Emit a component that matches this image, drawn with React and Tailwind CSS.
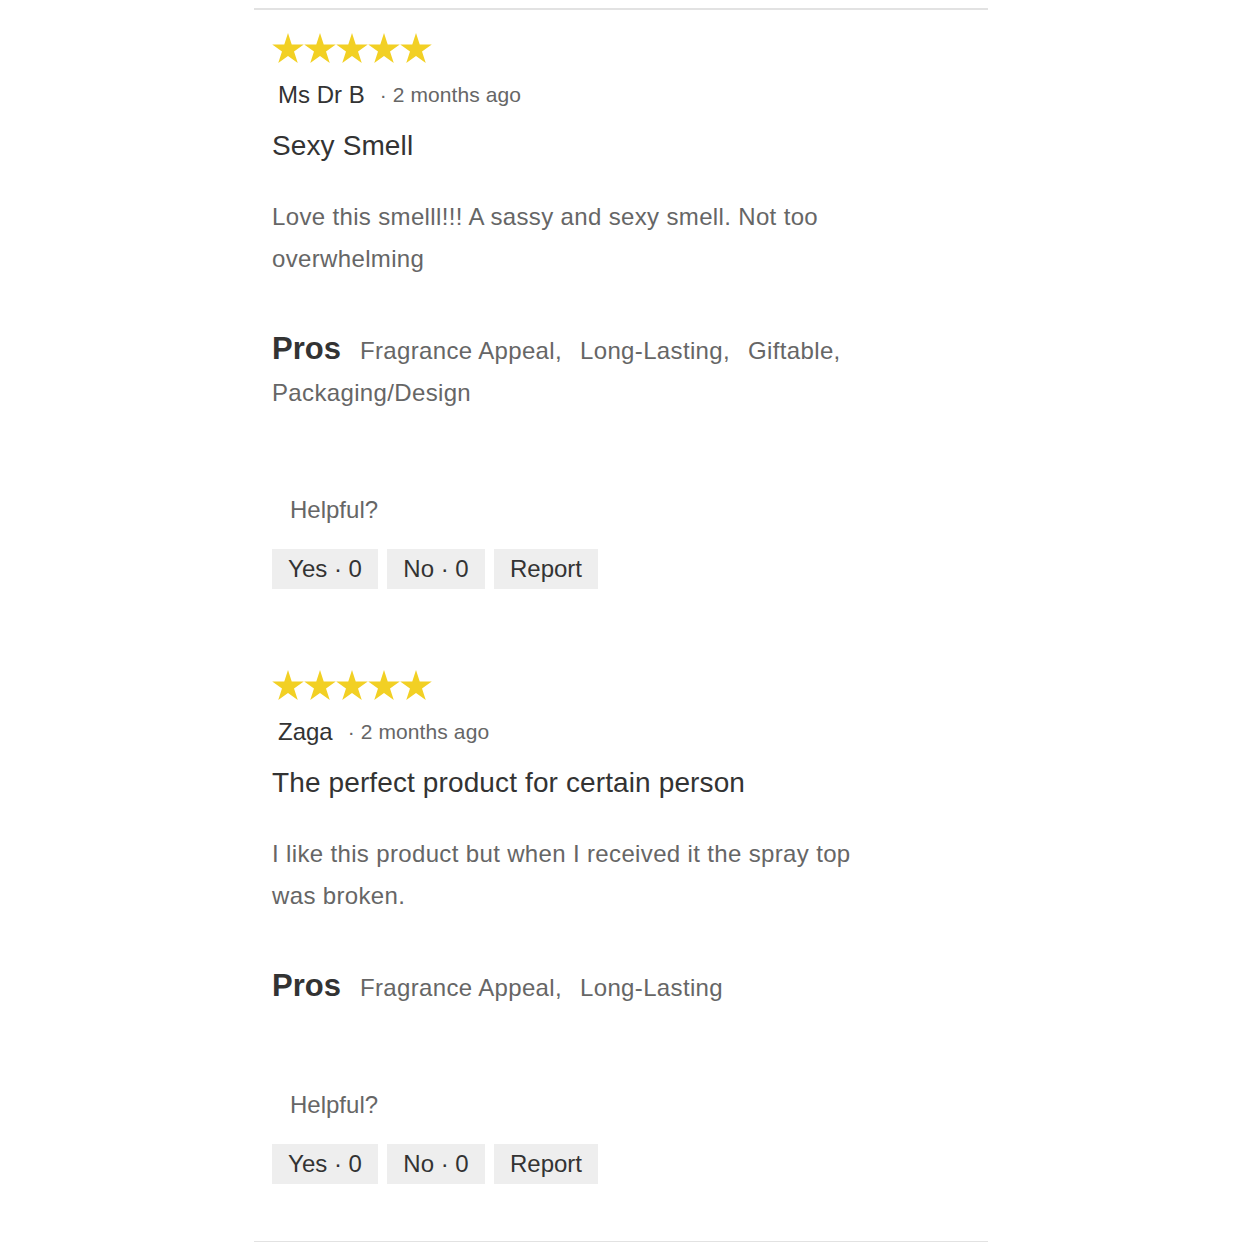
const reviews = [
  {
    name: 'Ms Dr B',
    date: '2 months ago',
    title: 'Sexy Smell',
    body: 'Love this smelll!!! A sassy and sexy smell. Not too overwhelming',
    pros: ['Fragrance Appeal,', 'Long-Lasting,', 'Giftable,', 'Packaging/Design'],
  },
  {
    name: 'Zaga',
    date: '2 months ago',
    title: 'The perfect product for certain person',
    body: 'I like this product but when I received it the spray top was broken.',
    pros: ['Fragrance Appeal,', 'Long-Lasting'],
  },
];

const Star = () => (
  <svg viewBox="0 0 24 22.83" className="w-[32px] h-[30px]" aria-hidden="true">
    <path
      fill="#f2d024"
      d="M12 0L14.83 8.72H24L16.58 14.11L19.42 22.83L12 17.44L4.58 22.83L7.42 14.11L0 8.72H9.17z"
    />
  </svg>
);

const Review = ({ review, first }) => {
  return (
    <div className={first ? 'pt-[23px]' : 'pt-[81px]'}>
      <div className="flex">
        {[0, 1, 2, 3, 4].map((i) => (
          <Star key={i} />
        ))}
      </div>

      <div className="mt-4 flex items-center h-8 pl-[6px]">
        <span className="text-[24px] text-[#333]">{review.name}</span>
        <span className="ml-[15px] text-[21px] text-[#666] tracking-[0.1px]">· {review.date}</span>
      </div>

      <h3 className="mt-[17px] text-[28px] leading-9 text-[#333] tracking-[0.12px]">{review.title}</h3>

      <p className="mt-8 max-w-[600px] text-[24px] leading-[42px] text-[#666] tracking-[0.35px]">
        {review.body}
      </p>

      <div className="mt-12 max-w-[600px] text-[24px] leading-[42px] text-[#666] tracking-[0.35px]">
        <span className="font-bold text-[31px] text-[#333] mr-[19px] tracking-normal">Pros</span>
        {review.pros.map((p) => (
          <span key={p} className="mr-[11px]">
            {p}{' '}
          </span>
        ))}
      </div>

      {/* helpful votes */}
      <div className="mt-20 pl-[18px] h-8 flex items-center text-[24px] text-[#666]">Helpful?</div>
      <div className="mt-[23px] flex gap-[9px] text-[24px] text-[#333]">
        <button className="w-[106px] h-10 bg-[#eeeeee] text-center">Yes · 0</button>
        <button className="w-[98px] h-10 bg-[#eeeeee] text-center">No · 0</button>
        <button className="w-[104px] h-10 bg-[#eeeeee] text-center">Report</button>
      </div>
    </div>
  );
};

const App = () => {
  return (
    <div className="min-h-[1242px] bg-white font-['Liberation_Sans',Arial,sans-serif]">
      <div className="pt-[8px]">
        <div className="w-[734px] mx-auto border-t-2 border-[#e2e2e2] px-[18px] pb-[57px]">
          {reviews.map((r, i) => (
            <Review key={r.name} review={r} first={i === 0} />
          ))}
        </div>
        <div className="w-[734px] mx-auto border-t-2 border-[#e2e2e2]" />
      </div>
    </div>
  );
};

export default App;
